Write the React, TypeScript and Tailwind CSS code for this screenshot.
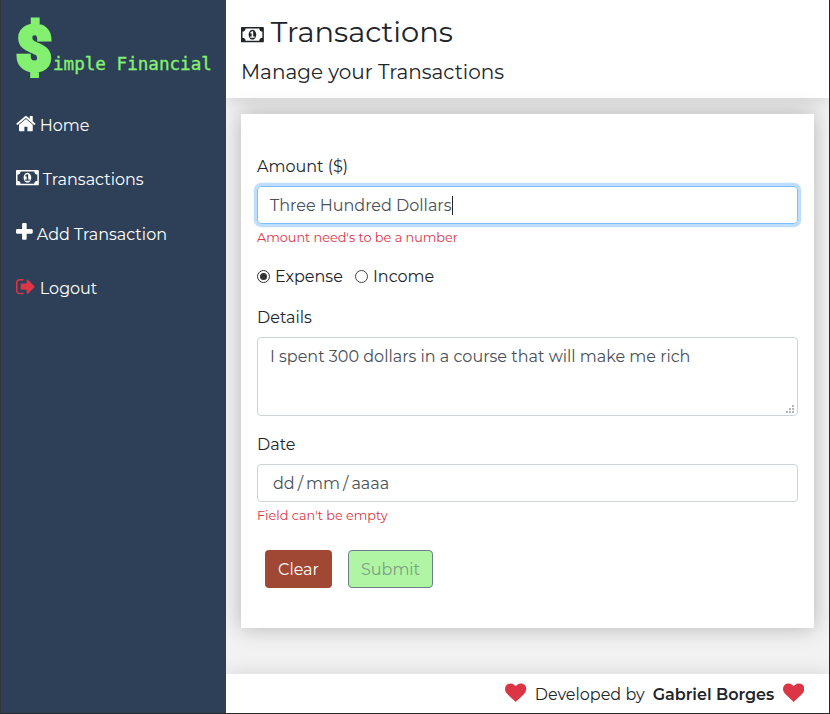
import React from "react";

type IconProps = { className?: string };

const HomeIcon = ({ className = "" }: IconProps) => (
  <svg viewBox="0 0 1664 1792" className={`h-[21.33px] w-[19.8px] shrink-0 ${className}`} fill="currentColor">
    <path d="M1408 992v480q0 26-19 45t-45 19H960v-384H704v384H320q-26 0-45-19t-19-45V992q0-1 .5-3t.5-3l575-474 575 474q1 2 1 6zm223-69l-62 74q-8 9-21 11h-3q-13 0-21-7L832 424l-692 577q-12 8-24 7-13-2-21-11l-62-74q-8-10-7-23.5T37 878L756 279q32-26 76-26t76 26l244 204V288q0-14 9-23t23-9h192q14 0 23 9t9 23v408l219 182q10 8 11 21.5t-7 23.5z" />
  </svg>
);

const MoneyIcon = ({ className = "" }: IconProps) => (
  <svg viewBox="0 0 1920 1792" className={`h-[21.33px] w-[22.86px] shrink-0 ${className}`} fill="currentColor">
    <path d="M768 1152h384v-96h-128V608H910L762 745l77 80q42-37 55-57h2v288H768v96zm512-256q0 70-21 142t-59.5 134-101.5 101-138 39-138-39-101.5-101T661 1038t-21-142 21-142 59.5-134T822 519t138-39 138 39 101.5 101T1259 754t21 142zm512 256V640q-106 0-181-75t-75-181H384q0 106-75 181t-181 75v512q106 0 181 75t75 181h1152q0-106 75-181t181-75zm128-832v1152q0 26-19 45t-45 19H64q-26 0-45-19t-19-45V320q0-26 19-45t45-19h1792q26 0 45 19t19 45z" />
  </svg>
);

const PlusIcon = ({ className = "" }: IconProps) => (
  <svg viewBox="0 0 1408 1408" className={`h-[16.76px] w-[16.76px] shrink-0 ${className}`} fill="currentColor">
    <path d="M1408 608v192q0 40-28 68t-68 28H896v416q0 40-28 68t-68 28H608q-40 0-68-28t-28-68V896H96q-40 0-68-28T0 800V608q0-40 28-68t68-28h416V96q0-40 28-68t68-28h192q40 0 68 28t28 68v416h416q40 0 68 28t28 68z" />
  </svg>
);

const SignOutIcon = ({ className = "" }: IconProps) => (
  <svg viewBox="0 0 1664 1792" className={`h-[21.33px] w-[19.8px] shrink-0 ${className}`} fill="currentColor">
    <path d="M640 1440q0 4 1 20t.5 26.5-3 23.5-10 19.5-20.5 6.5H288q-119 0-203.5-84.5T0 1248V544q0-119 84.5-203.5T288 256h320q13 0 22.5 9.5t9.5 22.5q0 4 1 20t.5 26.5-3 23.5-10 19.5T608 384H288q-66 0-113 47t-47 113v704q0 66 47 113t113 47h312l11.5 1 11.5 3 8 5.5 7 9 2 13.5zm928-544q0 26-19 45l-544 544q-19 19-45 19t-45-19-19-45v-288H448q-26 0-45-19t-19-45V704q0-26 19-45t45-19h448V352q0-26 19-45t45-19 45 19l544 544q19 19 19 45z" />
  </svg>
);

const HeartIcon = ({ className = "" }: IconProps) => (
  <svg viewBox="0 0 1792 1792" className={`size-[21.33px] shrink-0 text-[#dc3545] ${className}`} fill="currentColor">
    <path d="M896 1664q-26 0-44-18l-624-602q-10-8-27.5-26T145 952.5 77 855 23.5 734 0 596q0-220 127-344t351-124q62 0 126.5 21.5t120 58T820 276t76 68q36-36 76-68t95.5-68.5 120-58T1314 128q224 0 351 124t127 344q0 221-229 450l-623 600q-18 18-44 18z" />
  </svg>
);

function Sidebar() {
  return (
    <aside className="w-[225px] shrink-0 bg-[#2e4057] text-white">
      <div className="flex h-[98px] items-start pl-[14px] text-[#84f070]">
        <span className="mt-[11px] h-[76px] w-[38px] text-center font-[Roboto] text-[62px] leading-[76px] font-black [-webkit-text-stroke:4px_#84f070]">$</span>
        <span className="mt-[52px] font-['DejaVu_Sans_Mono',monospace] text-[17.6px] leading-6 whitespace-pre [-webkit-text-stroke:0.35px_#84f070]">imple Financial</span>
      </div>
      <nav className="flex flex-col pl-[15px]">
        <a className="flex h-[54.33px] items-center gap-1">
          <HomeIcon className="-mt-[4px]" />
          <span className="pt-[2px]">Home</span>
        </a>
        <a className="flex h-[54.33px] items-center gap-1">
          <MoneyIcon className="-mt-[3px]" />
          <span className="pt-[2px]">Transactions</span>
        </a>
        <a className="flex h-[54.33px] items-center gap-1">
          <PlusIcon className="-mt-[5px]" />
          <span className="pt-[2px]">Add Transaction</span>
        </a>
        <a className="flex h-[54.33px] items-center gap-1">
          <SignOutIcon className="-mt-[3px] text-[#dc3545]" />
          <span className="pt-[2px]">Logout</span>
        </a>
      </nav>
    </aside>
  );
}

function TransactionForm() {
  return (
    <form className="mx-[15px] mt-4 h-[514px] bg-white px-4 pt-[41px] shadow-[0_0_20px_rgba(0,0,0,0.26)]">
      <label className="block">Amount ($)</label>
      <div className="mt-[7px] flex h-[38px] items-center rounded border border-[#80bdff] px-3 text-[#495057] shadow-[0_0_0_3.2px_#bfdeff]">
        <span className="pt-[2px]">Three Hundred Dollars</span>
        <span className="h-[19px] w-px bg-[#212529]" />
      </div>
      <p className="mt-1 h-[19px] text-[12.8px] leading-[19px] text-[#dc3545]">Amount need's to be a number</p>
      <div className="mt-[17px] flex h-6 items-center">
        <span className="flex size-[13px] items-center justify-center rounded-full border border-[#333] bg-white">
          <span className="size-[7px] rounded-full bg-[#333]" />
        </span>
        <span className="ml-[5px] w-[80px] pt-[2px]">Expense</span>
        <span className="size-[13px] rounded-full border border-[#444] bg-white" />
        <span className="ml-[5px] pt-[2px]">Income</span>
      </div>
      <label className="mt-[18px] block">Details</label>
      <div className="relative mt-[7px] h-[79px] rounded border border-[#ced4da] px-3 pt-[7px] text-[#495057]">
        <span>I spent 300 dollars in a course that will make me rich</span>
        <svg className="absolute right-[3px] bottom-[2px] size-2" viewBox="0 0 8 8" fill="#b5b5b5" shapeRendering="crispEdges">
          <path d="M6 0h2v2H6zM3 3h2v2H3zM6 3h2v2H6zM0 6h2v2H0zM3 6h2v2H3zM6 6h2v2H6z" />
        </svg>
      </div>
      <label className="mt-[17px] block">Date</label>
      <div className="mt-[7px] flex h-[38px] items-center rounded border border-[#ced4da] px-[15px] pt-[2px] text-[#495057]">
        <span>dd</span>
        <span className="mx-[3px]">/</span>
        <span>mm</span>
        <span className="mx-[3px]">/</span>
        <span>aaaa</span>
      </div>
      <p className="mt-1 h-[19px] text-[12.8px] leading-[19px] text-[#dc3545]">Field can't be empty</p>
      <div className="mt-[25px] flex gap-4 pl-2">
        <button type="button" className="h-[38px] w-[67px] rounded bg-[#a04834] pt-[2px] text-white">Clear</button>
        <button type="button" className="h-[38px] w-[85px] rounded border border-[#6c7f89] bg-[#aff5a4] pt-[2px] text-[#7d9f82]">Submit</button>
      </div>
    </form>
  );
}

export default function App() {
  return (
    <div className="flex h-[714px] w-[830px] overflow-hidden border-r border-b border-l border-r-[#2b2b2b] border-b-[#2b2b2b] border-l-[#333] bg-white font-[Montserrat,Inter,sans-serif] text-base leading-6 text-[#212529]">
      <Sidebar />
      <main className="flex min-w-0 flex-1 flex-col overflow-hidden bg-[#f2f2f2]">
        <header className="h-[98px] shrink-0 bg-white pl-[15px] shadow-[0_0_20px_rgba(0,0,0,0.18)]">
          <h1 className="flex h-[64px] items-center gap-[7px] text-[28.9px]">
            <MoneyIcon className="mt-[5px]" />
            <span>Transactions</span>
          </h1>
          <p className="-mt-1 text-[20px]">Manage your Transactions</p>
        </header>
        <TransactionForm />
        <footer className="mt-auto flex h-[39px] shrink-0 items-center justify-end bg-white pr-[25px] shadow-[0_0_20px_rgba(0,0,0,0.12)]">
          <HeartIcon className="-mt-[2px]" />
          <span className="ml-2 w-[118px] pt-[3px]">Developed by</span>
          <span className="w-[123px] pt-[3px] font-semibold">Gabriel Borges</span>
          <HeartIcon className="-mt-[2px] ml-[7px]" />
        </footer>
      </main>
    </div>
  );
}
